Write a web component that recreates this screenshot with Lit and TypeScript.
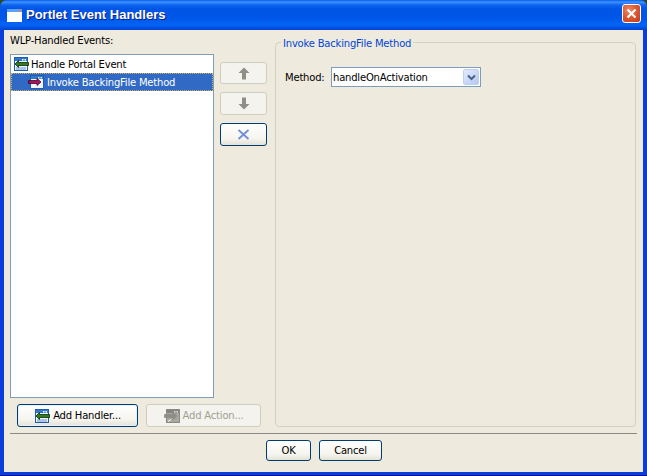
import { LitElement, html, css, svg } from "lit";
import { customElement } from "lit/decorators.js";

const handlerIcon = () => svg`
  <svg class="ic" width="16" height="16" viewBox="0 0 16 16">
    <rect x="1.5" y="1.5" width="13" height="13" fill="#eef4fc" stroke="#1c5fae"/>
    <rect x="2" y="2" width="12" height="3" fill="#2f78cc"/>
    <rect x="9" y="3" width="1.5" height="1.5" fill="#fff"/><rect x="11.5" y="3" width="1.5" height="1.5" fill="#fff"/>
    <rect x="3" y="11" width="10" height="3" fill="#a9c6ea"/>
    <path d="M5.5 4.5L2 8L5.5 11.5V9.5H15.5V6.5H5.5Z" fill="#2e7d18" stroke="#0c2a08" stroke-width="0.8"/>
  </svg>`;

const invokeIcon = (arrow: string, edge: string, frame: string, fill: string, strip: string) => svg`
  <svg class="ic" width="16" height="16" viewBox="0 0 16 16">
    <rect x="2.5" y="1.5" width="13" height="13" fill="${fill}" stroke="${frame}"/>
    <rect x="3" y="2" width="12" height="3" fill="${strip}"/>
    <rect x="10" y="3" width="1.5" height="1.5" fill="#dfe8f5"/><rect x="12.5" y="3" width="1.5" height="1.5" fill="#dfe8f5"/>
    <path d="M4 13.5L7 11.5" stroke="#fff" stroke-width="1"/>
    <path d="M0.5 6.5H9V4.5L13 8L9 11.5V9.5H0.5Z" fill="${arrow}" stroke="${edge}" stroke-width="0.8"/>
  </svg>`;

@customElement("app-root")
export class AppRoot extends LitElement {
  static styles = css`
    :host {
      display: block;
      width: 647px;
      height: 476px;
      background: #2a4a28;
      font-family: "DejaVu Sans", Verdana, sans-serif;
      font-size: 10px;
      letter-spacing: -0.2px;
      color: #000;
      overflow: hidden;
    }
    .win {
      width: 647px;
      height: 476px;
      box-sizing: border-box;
      display: flex;
      flex-direction: column;
      border-radius: 7px 7px 0 0;
      background: #0a3ddb;
      border-bottom: 1px solid #00138c;
      overflow: hidden;
    }
    .title {
      height: 30px;
      flex: none;
      display: flex;
      align-items: center;
      box-sizing: border-box;
      padding: 0 7px 0 7px;
      background: linear-gradient(180deg, #0a5ae8 0, #3c95ff 2px, #0f63ee 5px, #0055e6 9px, #0056e8 18px, #0465f5 25px, #0250e0 28px, #0040d0 30px);
    }
    .wicon { flex: none; margin: 0 4px 0 0; }
    .title span {
      flex: 1;
      color: #fff;
      font-family: "Liberation Sans", Arial, sans-serif;
      font-weight: 700;
      font-size: 13px;
      letter-spacing: 0;
      text-shadow: 1px 1px 0 #0f1f80;
      margin-top: -1px;
    }
    .close {
      flex: none;
      width: 19px;
      height: 19px;
      box-sizing: border-box;
      margin: -3px -1px 0 0;
      border: 1px solid #fff;
      border-radius: 3px;
      background: radial-gradient(circle at 35% 30%, #ec8a68 0, #dd5a34 45%, #c33a16 100%);
      display: flex;
      align-items: center;
      justify-content: center;
    }
    .client {
      flex: 1;
      min-height: 0;
      margin: 0 4px 3px 4px;
      background: #eeeade;
      padding: 4px 6px 0 6px;
      display: flex;
      flex-direction: column;
    }
    .main { display: flex; height: 393px; flex: none; }
    .left { width: 204px; flex: none; display: flex; flex-direction: column; }
    .lbl { height: 20px; line-height: 14px; flex: none; }
    .list {
      height: 344px;
      flex: none;
      box-sizing: border-box;
      border: 1px solid #7f9db9;
      background: #fff;
    }
    .row { height: 18px; display: flex; align-items: center; white-space: nowrap; }
    .row .ic { margin-right: 2px; }
    .r1 { padding-left: 2px; }
    .r2 {
      padding-left: 17px;
      background: #316ac5;
      color: #fff;
      box-sizing: border-box;
      outline: 1px dotted #d8b050;
      outline-offset: -1px;
    }
    .r2 .ic { margin-right: 3px; }
    .addrow { display: flex; gap: 8px; margin: 6px 0 0 7px; }
    .btn {
      box-sizing: border-box;
      height: 23px;
      flex: none;
      border: 1px solid #003c74;
      border-radius: 3px;
      background: linear-gradient(180deg, #ffffff 0, #f5f4ee 70%, #e4e2d4 100%);
      display: flex;
      align-items: center;
      justify-content: center;
      white-space: nowrap;
    }
    .btn.dis {
      border-color: #cfcdc0;
      background: #f4f3ee;
      color: #a1a192;
    }
    .add { width: 121px; box-shadow: inset 0 0 0 1px #e6f0ff; }
    .add .ic { margin-right: 3px; }
    .act { width: 115px; }
    .act .ic { margin-right: 3px; }
    .mid {
      width: 47px;
      flex: none;
      margin: 28px 8px 0 6px;
      display: flex;
      flex-direction: column;
      gap: 8px;
    }
    .mid .btn { width: 47px; }
    .mid .btn.first { height: 22px; }
    .group {
      width: 361px;
      height: 385px;
      flex: none;
      margin-top: 8px;
      box-sizing: border-box;
      border: 1px solid #d3d2c0;
      border-radius: 4px;
      position: relative;
      padding: 24px 0 0 9px;
    }
    .legend {
      position: absolute;
      left: 5px;
      top: -6px;
      background: #eeeade;
      padding: 0 2px;
      color: #0046d5;
      line-height: 13px;
    }
    .field { display: flex; align-items: center; gap: 6px; }
    .mlabel { width: 40px; flex: none; white-space: nowrap; }
    .select {
      width: 150px;
      height: 20px;
      box-sizing: border-box;
      border: 1px solid #7f9db9;
      background: #fff;
      display: flex;
      align-items: center;
      padding: 0 1px 0 1px;
      flex: none;
    }
    .select span { flex: 1; }
    .drop {
      width: 16px;
      height: 16px;
      box-sizing: border-box;
      border: 1px solid #bcd0f4;
      border-radius: 2px;
      background: linear-gradient(135deg, #e3ebfd, #b4c8f4);
      display: flex;
      align-items: center;
      justify-content: center;
    }
    .sep { height: 1px; background: #8a8a84; margin: 6px 0 0 0; flex: none; width: 627px; }
    .foot { display: flex; justify-content: center; gap: 8px; margin-top: 6px; padding-left: 1px; }
    .foot .btn { height: 21px; }
    .ok { width: 45px; }
    .cancel { width: 63px; }
  `;

  render() {
    return html`
      <div class="win">
        <div class="title">
          <svg class="wicon" width="15" height="13" viewBox="0 0 15 13">
            <rect x="0" y="0" width="15" height="3" fill="#5aa0f5"/>
            <rect x="12" y="0.5" width="2" height="2" fill="#e8783c"/>
            <rect x="0" y="3" width="15" height="10" fill="#fff"/>
          </svg>
          <span>Portlet Event Handlers</span>
          <div class="close">
            <svg width="11" height="11" viewBox="0 0 11 11"><path d="M1.5 1.5L9.5 9.5M9.5 1.5L1.5 9.5" stroke="#fff" stroke-width="2.2"/></svg>
          </div>
        </div>
        <div class="client">
          <div class="main">
            <div class="left">
              <div class="lbl">WLP-Handled Events:</div>
              <div class="list">
                <div class="row r1">${handlerIcon()}Handle Portal Event</div>
                <div class="row r2">${invokeIcon("#b0105a", "#3a0a28", "#1c5fae", "#eef4fc", "#2f78cc")}Invoke BackingFile Method</div>
              </div>
              <div class="addrow">
                <div class="btn add">${handlerIcon()}Add Handler...</div>
                <div class="btn dis act">${invokeIcon("#8e8e86", "#8e8e86", "#8a8a82", "#a8a89e", "#85857c")}Add Action...</div>
              </div>
            </div>
            <div class="mid">
              <div class="btn dis first">
                <svg width="12" height="13" viewBox="0 0 12 13"><path d="M6 0.5L11.5 6H8V12.5H4V6H0.5Z" fill="#8f8f86"/></svg>
              </div>
              <div class="btn dis">
                <svg width="12" height="13" viewBox="0 0 12 13"><path d="M6 12.5L11.5 7H8V0.5H4V7H0.5Z" fill="#8f8f86"/></svg>
              </div>
              <div class="btn">
                <svg width="13" height="11" viewBox="0 0 13 11"><path d="M1.5 1L11.5 10M11.5 1L1.5 10" stroke="#6f8fd8" stroke-width="1.8"/></svg>
              </div>
            </div>
            <div class="group">
              <div class="legend">Invoke BackingFile Method</div>
              <div class="field">
                <span class="mlabel">Method:</span>
                <div class="select">
                  <span>handleOnActivation</span>
                  <div class="drop">
                    <svg width="9" height="7" viewBox="0 0 9 7"><path d="M1 1.5L4.5 5L8 1.5" fill="none" stroke="#4d6185" stroke-width="2"/></svg>
                  </div>
                </div>
              </div>
            </div>
          </div>
          <div class="sep"></div>
          <div class="foot">
            <div class="btn ok">OK</div>
            <div class="btn cancel">Cancel</div>
          </div>
        </div>
      </div>
    `;
  }
}
